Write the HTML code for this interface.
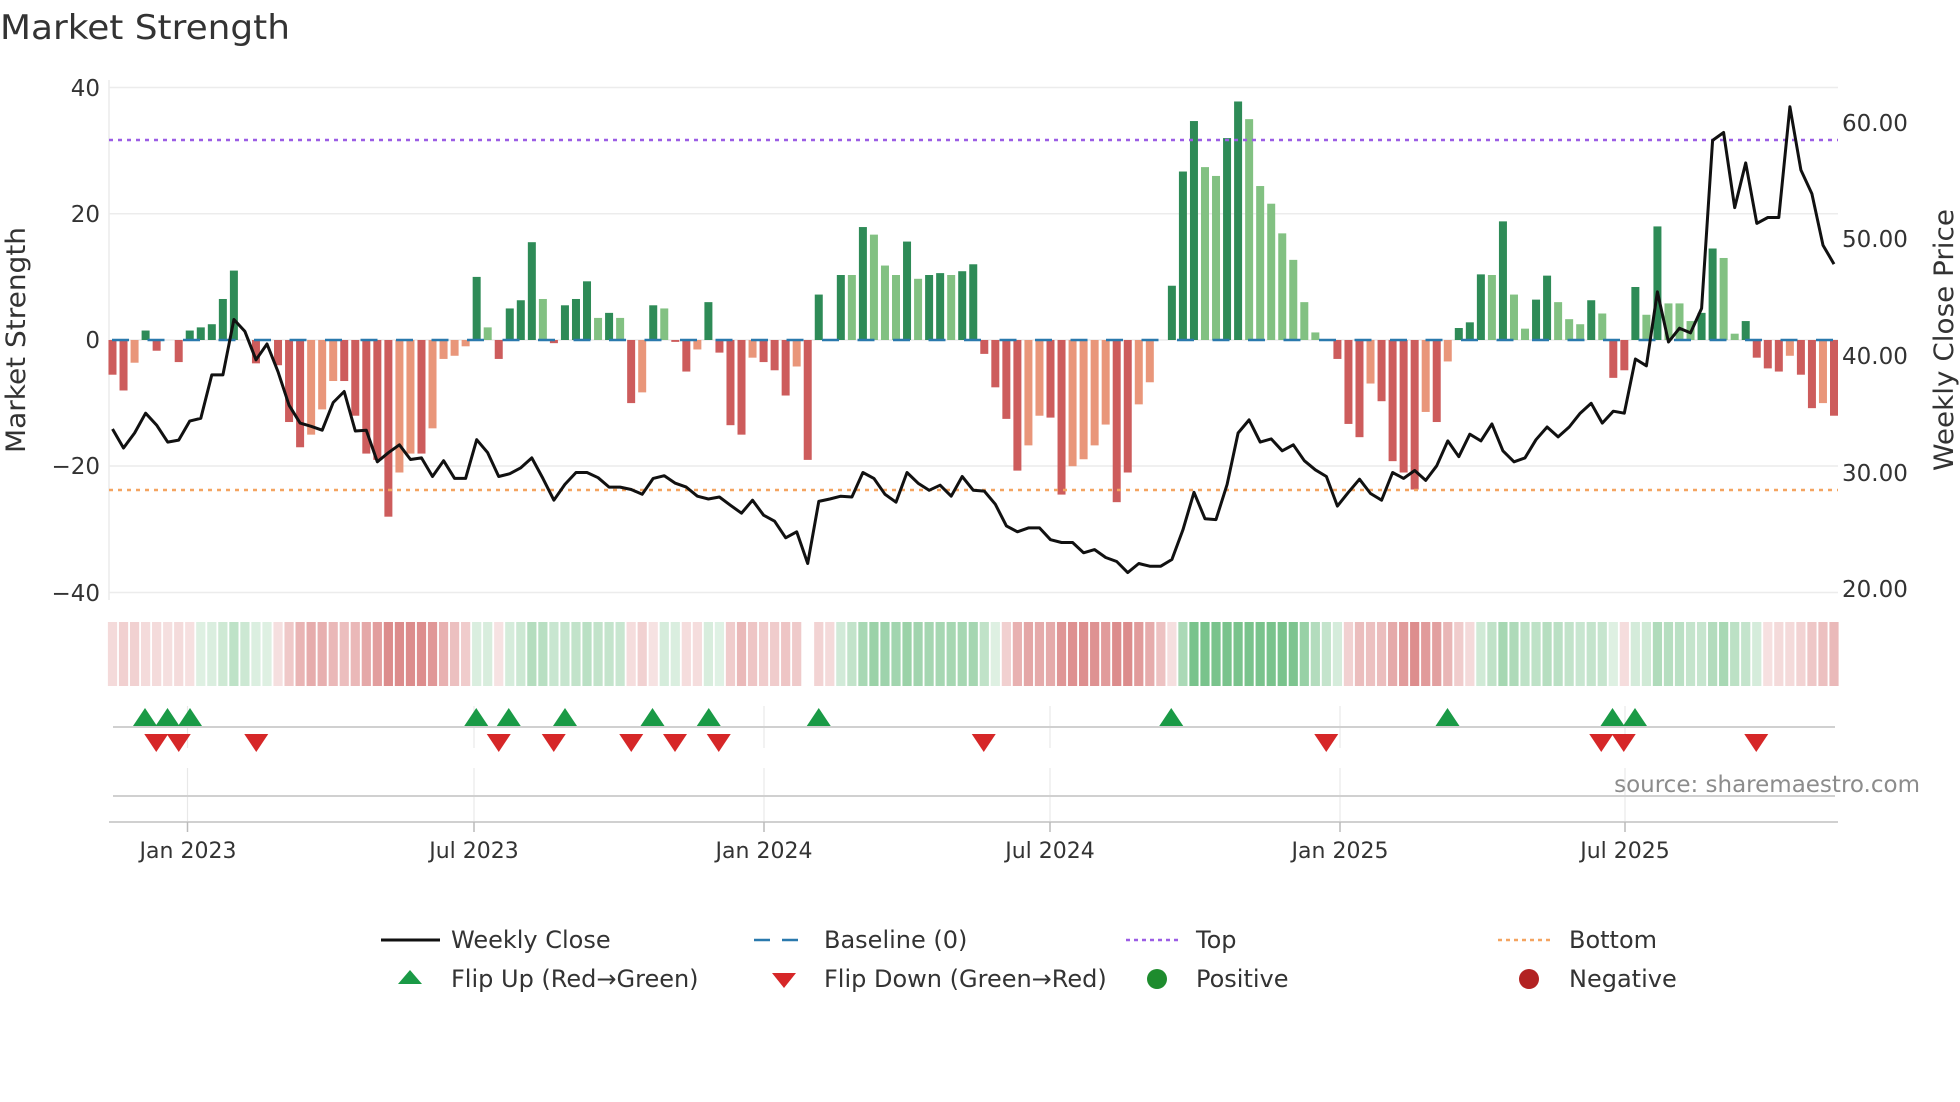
<!DOCTYPE html>
<html><head><meta charset="utf-8"><style>
html,body{margin:0;padding:0;background:#fff;width:1960px;height:1102px;overflow:hidden}
svg{display:block}
text{font-family:"DejaVu Sans","Liberation Sans",sans-serif}
</style></head><body>
<svg id="s" width="1960" height="1102" viewBox="0 0 1960 1102" xmlns="http://www.w3.org/2000/svg">
<text x="0" y="39" font-size="34" fill="#333" textLength="290" lengthAdjust="spacingAndGlyphs">Market Strength</text>
<g stroke="#ececec" stroke-width="1.5">
<line x1="109" x2="1838" y1="87.5" y2="87.5"/><line x1="109" x2="1838" y1="213.7" y2="213.7"/><line x1="109" x2="1838" y1="340" y2="340"/><line x1="109" x2="1838" y1="466" y2="466"/><line x1="109" x2="1838" y1="592.5" y2="592.5"/>
<line x1="109" x2="109" y1="80" y2="600"/>
</g>
<g font-size="23" fill="#333" text-anchor="end">
<text x="100" y="96">40</text><text x="100" y="222">20</text><text x="100" y="348">0</text><text x="100" y="474">−20</text><text x="100" y="601">−40</text>
</g>
<g font-size="23" fill="#333">
<text x="1842" y="131">60.00</text><text x="1842" y="247">50.00</text><text x="1842" y="364">40.00</text><text x="1842" y="481">30.00</text><text x="1842" y="597">20.00</text>
</g>
<text transform="translate(25,340) rotate(-90)" font-size="27" fill="#333" text-anchor="middle" textLength="226" lengthAdjust="spacingAndGlyphs">Market Strength</text>
<text transform="translate(1953,340) rotate(-90)" font-size="27" fill="#333" text-anchor="middle" textLength="262" lengthAdjust="spacingAndGlyphs">Weekly Close Price</text>
<g id="bars"></g>
<line x1="109" x2="1838" y1="340" y2="340" stroke="#2a79ad" stroke-width="2.5" stroke-dasharray="17 18.5" stroke-dashoffset="-3"/>
<line x1="109" x2="1838" y1="140" y2="140" stroke="#9b5de5" stroke-width="2.5" stroke-dasharray="4 5"/>
<line x1="109" x2="1838" y1="490" y2="490" stroke="#f4a460" stroke-width="2.5" stroke-dasharray="4 5"/>
<polyline id="price" fill="none" stroke="#111" stroke-width="3" stroke-linejoin="round"/>
<g id="heat"></g>
<g stroke="#e8e8e8" stroke-width="1.2">
<line x1="187.5" x2="187.5" y1="706" y2="748"/><line x1="474" x2="474" y1="706" y2="748"/><line x1="764" x2="764" y1="706" y2="748"/><line x1="1050" x2="1050" y1="706" y2="748"/><line x1="1340" x2="1340" y1="706" y2="748"/><line x1="1625" x2="1625" y1="706" y2="748"/>
<line x1="187.5" x2="187.5" y1="768" y2="822"/><line x1="474" x2="474" y1="768" y2="822"/><line x1="764" x2="764" y1="768" y2="822"/><line x1="1050" x2="1050" y1="768" y2="822"/><line x1="1340" x2="1340" y1="768" y2="822"/><line x1="1625" x2="1625" y1="768" y2="822"/>
</g>
<line x1="113" x2="1835" y1="727" y2="727" stroke="#d0d0d0" stroke-width="2"/>
<line x1="113" x2="1835" y1="796" y2="796" stroke="#d0d0d0" stroke-width="2"/>
<line x1="109" x2="1838" y1="822" y2="822" stroke="#d0d0d0" stroke-width="2"/>
<g stroke="#bbb" stroke-width="1.5">
<line x1="187.5" x2="187.5" y1="822" y2="832"/><line x1="474" x2="474" y1="822" y2="832"/><line x1="764" x2="764" y1="822" y2="832"/><line x1="1050" x2="1050" y1="822" y2="832"/><line x1="1340" x2="1340" y1="822" y2="832"/><line x1="1625" x2="1625" y1="822" y2="832"/>
</g>
<g id="marks"></g>
<g font-size="22" fill="#333" text-anchor="middle">
<text x="188" y="858">Jan 2023</text><text x="474" y="858">Jul 2023</text><text x="764" y="858">Jan 2024</text><text x="1050" y="858">Jul 2024</text><text x="1340" y="858">Jan 2025</text><text x="1625" y="858">Jul 2025</text>
</g>
<text x="1920" y="792" font-size="23" fill="#8c8c8c" text-anchor="end">source: sharemaestro.com</text>
<g font-size="24" fill="#333">
<line x1="381" x2="440" y1="940" y2="940" stroke="#111" stroke-width="3"/>
<text x="451" y="948">Weekly Close</text>
<line x1="754" x2="810" y1="940" y2="940" stroke="#2a79ad" stroke-width="2.5" stroke-dasharray="16 12"/>
<text x="824" y="948">Baseline (0)</text>
<line x1="1126" x2="1182" y1="940" y2="940" stroke="#9b5de5" stroke-width="2.5" stroke-dasharray="4 4"/>
<text x="1196" y="948">Top</text>
<line x1="1498" x2="1554" y1="940" y2="940" stroke="#f4a460" stroke-width="2.5" stroke-dasharray="4 4"/>
<text x="1569" y="948">Bottom</text>
<polygon points="398,984 410,970 422,984" fill="#1a9a46"/>
<text x="451" y="987">Flip Up (Red→Green)</text>
<polygon points="772,973 796,973 784,988" fill="#d62728"/>
<text x="824" y="987">Flip Down (Green→Red)</text>
<circle cx="1157" cy="979" r="10" fill="#1e8c2e"/>
<text x="1196" y="987">Positive</text>
<circle cx="1529" cy="979" r="10" fill="#b22222"/>
<text x="1569" y="987">Negative</text>
</g>
</svg>
<script>
var B=[[-5.5,'r'],[-8,'r'],[-3.6,'l'],[1.5,'g'],[-1.7,'r'],[0,'r'],[-3.5,'r'],[1.5,'g'],[2,'g'],[2.5,'g'],[6.5,'g'],[11,'g'],[0,'r'],[-3.7,'r'],[0,'r'],[-4,'r'],[-13,'r'],[-17,'r'],[-15,'l'],[-11,'l'],[-6.5,'l'],[-6.5,'r'],[-12,'r'],[-18,'r'],[-19,'r'],[-28,'r'],[-21,'l'],[-18,'l'],[-18,'r'],[-14,'l'],[-3,'l'],[-2.5,'l'],[-1,'l'],[10,'g'],[2,'G'],[-3,'r'],[5,'g'],[6.3,'g'],[15.5,'g'],[6.5,'G'],[-0.5,'r'],[5.5,'g'],[6.5,'g'],[9.3,'g'],[3.5,'G'],[4.3,'g'],[3.5,'G'],[-10,'r'],[-8.3,'l'],[5.5,'g'],[5,'G'],[-0.3,'r'],[-5,'r'],[-1.5,'l'],[6,'g'],[-2,'r'],[-13.5,'r'],[-15,'r'],[-2.8,'l'],[-3.5,'r'],[-4.8,'r'],[-8.8,'r'],[-4.2,'l'],[-19,'r'],[7.2,'g'],[0,'g'],[10.3,'g'],[10.3,'G'],[17.9,'g'],[16.7,'G'],[11.8,'G'],[10.3,'G'],[15.6,'g'],[9.7,'G'],[10.3,'g'],[10.6,'g'],[10.3,'G'],[10.9,'g'],[12,'g'],
[-2.2,'r'],[-7.5,'r'],[-12.5,'r'],[-20.7,'r'],[-16.7,'l'],[-12,'l'],[-12.3,'r'],[-24.5,'r'],[-20,'l'],[-18.9,'l'],[-16.7,'l'],[-13.4,'l'],[-25.7,'r'],[-21,'r'],[-10.2,'l'],[-6.7,'l'],[0,'g'],[8.6,'g'],[26.7,'g'],[34.7,'g'],[27.4,'G'],[26,'G'],[32,'g'],[37.8,'g'],[35,'G'],[24.4,'G'],[21.6,'G'],[16.9,'G'],[12.7,'G'],[6,'G'],[1.2,'G'],[0,'r'],[-3,'r'],[-13.3,'r'],[-15.4,'r'],[-6.9,'l'],[-9.7,'r'],[-19.2,'r'],[-21,'r'],[-23.7,'r'],[-11.4,'l'],[-13,'r'],[-3.4,'l'],[1.9,'g'],[2.8,'g'],[10.4,'g'],[10.3,'G'],[18.8,'g'],[7.2,'G'],[1.8,'G'],[6.4,'g'],[10.2,'g'],[6,'G'],[3.3,'G'],[2.5,'G'],[6.3,'g'],[4.2,'G'],[-6,'r'],[-4.8,'r'],[8.4,'g'],[4,'G'],[18,'g'],[5.8,'G'],[5.8,'G'],[3,'G'],[4.3,'g'],[14.5,'g'],[13,'G'],[1,'G'],[3,'g'],[-2.8,'r'],[-4.5,'r'],[-5,'r'],[-2.5,'l'],[-5.5,'r'],[-10.8,'r'],[-10,'l'],[-12,'r']];
var P=[1085,1133,1095,1045,1075,1118,1113,1065,1058,948,948,808,838,910,870,940,1025,1070,1078,1088,1018,990,1090,1088,1168,1145,1125,1162,1158,1205,1165,1210,1210,1112,1145,1205,1198,1183,1158,1210,1265,1225,1195,1195,1208,1232,1232,1238,1250,1210,1203,1222,1232,1255,1262,1257,1278,1298,1265,1303,1318,1360,1345,1425,1268,1262,1255,1257,1195,1210,1250,1270,1195,1222,1240,1227,1255,1205,1240,
1242,1275,1330,1345,1335,1335,1365,1372,1372,1398,1390,1410,1420,1448,1425,1432,1432,1415,1340,1245,1312,1314,1225,1095,1062,1118,1110,1140,1125,1165,1188,1205,1280,1245,1212,1248,1265,1195,1210,1190,1215,1178,1115,1155,1098,1115,1072,1140,1168,1158,1112,1080,1105,1080,1045,1020,1070,1040,1045,908,925,738,865,830,842,780,355,335,525,412,565,550,550,270,430,490,620,668];
var ns='http://www.w3.org/2000/svg',N=B.length,x0=112.5,dx=(1834-112.5)/(N-1);
var col={g:'#2e8b57',G:'#82c182',r:'#cd5c5c',l:'#e9967a'};
var bars=document.getElementById('bars'),heat=document.getElementById('heat');
function el(t,a,p){var e=document.createElementNS(ns,t);for(var k in a)e.setAttribute(k,a[k]);p.appendChild(e);return e;}
var pts=[],sm=0;
for(var i=0;i<N;i++){var x=x0+i*dx,v=B[i][0],h=Math.abs(v)*6.31;
 if(h>0.5)el('rect',{x:x-4,y:v>0?340-h:340,width:8,height:h,fill:col[B[i][1]]},bars);
 pts.push(x.toFixed(1)+','+(P[i]/2.529).toFixed(1));
 sm=sm*0.6+v*0.4;var a=Math.min(0.85,0.2+Math.abs(sm)/30);
 if(i==63)continue;
 el('rect',{x:x-4.6,y:622,width:9.2,height:64,fill:sm>=0?'#3aa655':'#cc5555','fill-opacity':(a*0.8).toFixed(2)},heat);
}
document.getElementById('price').setAttribute('points',pts.join(' '));
var m=document.getElementById('marks');
[116,134,152,381,407,452,522,567,655,937,1158,1290,1308].forEach(function(d){var x=d*1.25;el('polygon',{points:(x-12)+',726 '+x+',708 '+(x+12)+',726',fill:'#1a9a46'},m);});
[125,143,205,399,443,505,540,575,787,1061,1281,1299,1405].forEach(function(d){var x=d*1.25;el('polygon',{points:(x-12)+',734 '+(x+12)+',734 '+x+',752',fill:'#d62728'},m);});
</script>
</body></html>
